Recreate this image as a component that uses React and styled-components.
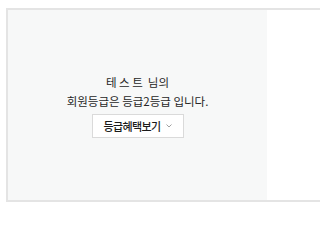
import React from "react";
import styled, { createGlobalStyle } from "styled-components";

const GlobalStyle = createGlobalStyle`
    body {
        margin: 0;
        background: #fff;
        font-family: "Noto Sans CJK KR", "Noto Sans", sans-serif;
        color: #333;
    }
`;

const Wrapper = styled.div`
    padding: 8px 0 0 6px;
    overflow: hidden;
`;

const Box = styled.div`
    border: 2px solid #e4e4e4;
    border-right: none;
    background: #fff;
`;

const Panel = styled.div`
    width: 259px;
    height: 190px;
    background: #f7f8f8;
    display: flex;
    flex-direction: column;
    align-items: center;
    justify-content: center;
`;

const Message = styled.p`
    margin: 0;
    font-size: 11.5px;
    line-height: 19px;
    text-align: center;
    color: #262626;
`;

const Name = styled.span`
    letter-spacing: 2.5px;
`;

const ToggleButton = styled.button`
    margin-top: 3px;
    width: 92px;
    height: 24px;
    padding: 0 0 0 11px;
    display: flex;
    align-items: center;
    gap: 5px;
    white-space: nowrap;
    border: 1px solid #dadada;
    background: #fff;
    font-family: inherit;
    font-size: 11px;
    letter-spacing: -0.6px;
    font-weight: 500;
    color: #1a1a1a;
    cursor: pointer;
`;

const Chevron = () => (
    <svg width="6" height="4" viewBox="0 0 6 4">
        <path d="M0.5 0.5 L3 3 L5.5 0.5" fill="none" stroke="#a0a0a0" strokeWidth="1" />
    </svg>
);

const App = () => {
    const userName = "테스트";
    const grade = "등급2등급";

    return (
        <>
            <GlobalStyle />
            <Wrapper>
                <Box>
                    <Panel>
                        <Message>
                            <Name>{userName}</Name> 님의
                            <br />
                            회원등급은 {grade} 입니다.
                        </Message>
                        <ToggleButton type="button">
                            등급혜택보기
                            <Chevron />
                        </ToggleButton>
                    </Panel>
                </Box>
            </Wrapper>
        </>
    );
};

export default App;
